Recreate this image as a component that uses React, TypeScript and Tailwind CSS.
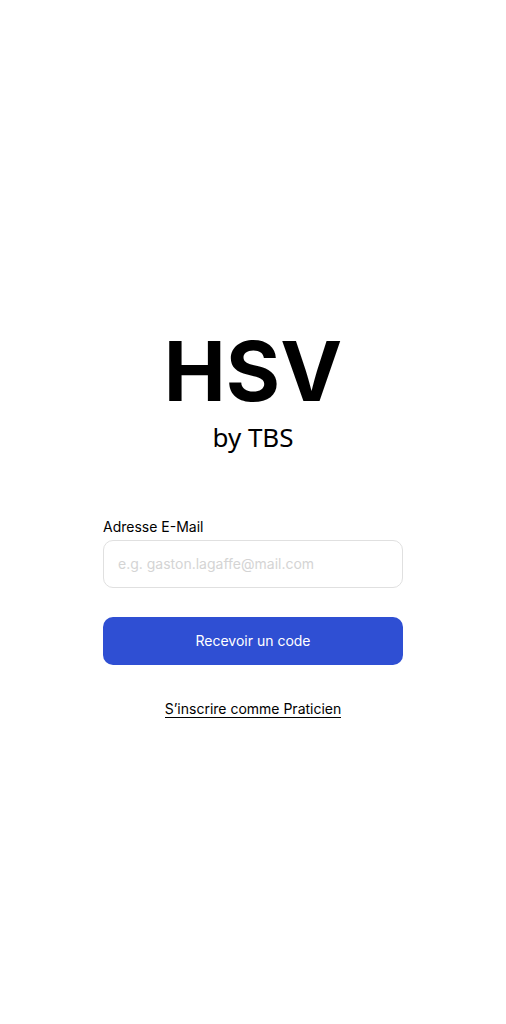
export default function App() {
  return (
    <main className="flex min-h-screen flex-col items-center justify-center bg-white px-6 pt-3.5 font-['Inter',sans-serif] text-sm text-black">
      <h1 className="flex flex-col items-center text-center">
        <span className="text-[83px] leading-[100px] font-bold">HSV</span>
        <span className="font-['Noto_Sans',sans-serif] text-[26px] leading-8">by TBS</span>
      </h1>
      <form className="mt-16 flex w-full max-w-[300px] flex-col" onSubmit={(e) => e.preventDefault()}>
        <label htmlFor="email" className="leading-5">Adresse E-Mail</label>
        <input
          id="email"
          type="email"
          placeholder="e.g. gaston.lagaffe@mail.com"
          className="mt-[3px] h-12 w-full rounded-[10px] border border-[#e0e0e0] bg-white px-3.5 placeholder:text-[#d4d4d4]"
        />
        <button type="submit" className="mt-[29px] h-12 w-full rounded-[10px] bg-[#2f4fd3] text-white">Recevoir un code</button>
      </form>
      <a href="#inscription" className="mt-9 border-b border-black leading-4">S’inscrire comme Praticien</a>
    </main>
  );
}
